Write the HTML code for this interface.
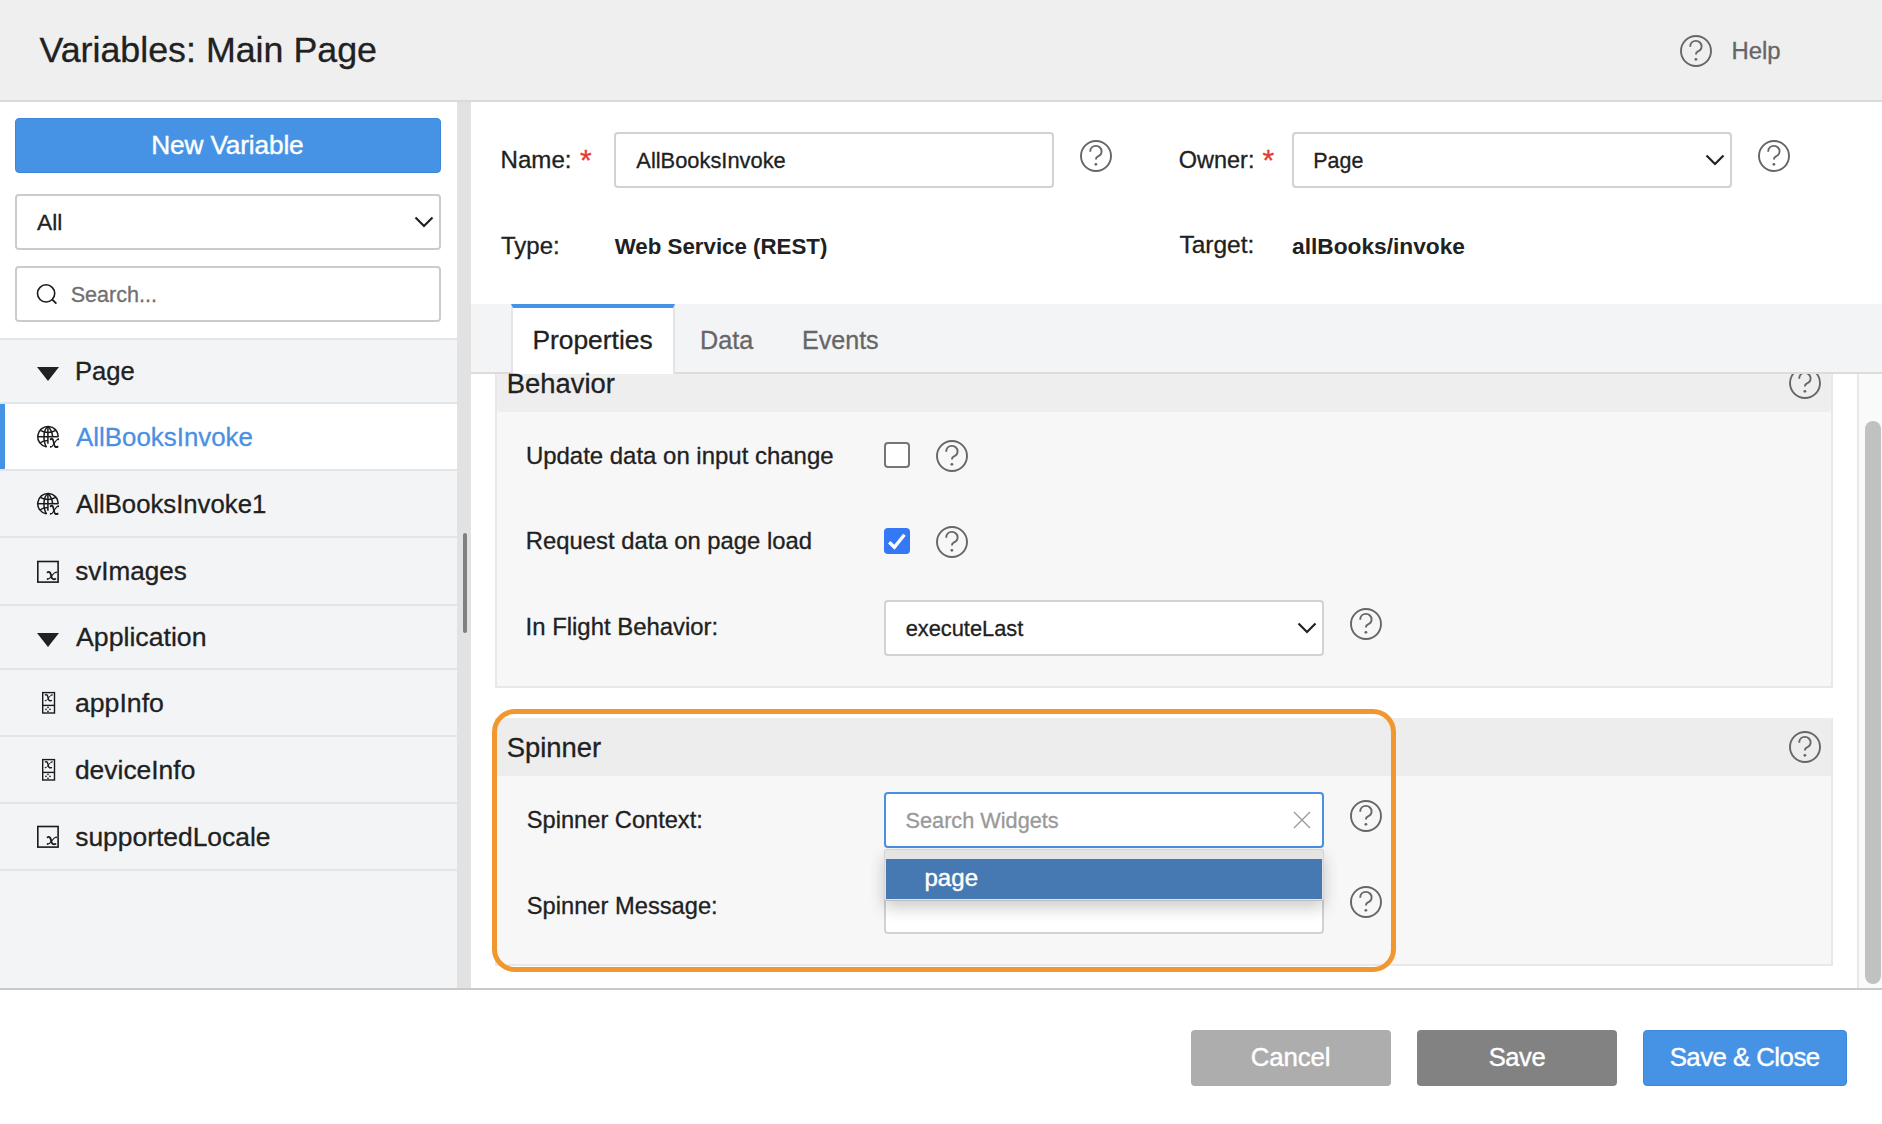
<!DOCTYPE html>
<html><head><meta charset="utf-8"><title>Variables: Main Page</title>
<style>
*{box-sizing:border-box}
html,body{margin:0;padding:0}
body{width:1882px;height:1124px;overflow:hidden;position:relative;background:#fff;font-family:"Liberation Sans",sans-serif;color:#212121}
.b{position:absolute}
.t{position:absolute;white-space:nowrap;line-height:0;font-family:"Liberation Sans",sans-serif;-webkit-text-stroke-width:0.3px}
.hi{position:absolute;overflow:visible}
</style></head><body>
<!-- header -->
<div class="b" style="left:0;top:0;width:1882px;height:100px;background:#efefef"></div>
<div class="b" style="left:0;top:100px;width:1882px;height:2px;background:#dadada"></div>
<svg class="hi" style="left:1679px;top:34px" width="34" height="34" viewBox="0 0 34 34"><circle cx="17" cy="17" r="15" fill="none" stroke="#666" stroke-width="1.9"/><path d="M11.2 12.7 C11.2 9.2 13.7 6.9 16.9 6.9 C20.1 6.9 22.6 9.3 22.6 12.3 C22.6 15.1 20.9 16.6 19 17.3 C17.5 17.9 16.9 18.9 16.9 20.5" fill="none" stroke="#666" stroke-width="1.9"/><circle cx="16.9" cy="25.3" r="1.4" fill="#666"/></svg>

<!-- left panel -->
<div class="b" style="left:0;top:102px;width:457px;height:236px;background:#fff"></div>
<div class="b" style="left:15px;top:118px;width:426px;height:55px;background:#4693e6;border:1px solid #3b87dc;border-radius:4px"></div>
<div class="b" style="left:15px;top:194px;width:426px;height:55.5px;background:#fff;border:2px solid #cbcbcb;border-radius:4px"></div>
<svg class="hi" style="left:414px;top:216px" width="20" height="12" viewBox="0 0 20 12"><path d="M1.5 1.5 L10 10 L18.5 1.5" fill="none" stroke="#212121" stroke-width="2.2"/></svg>
<div class="b" style="left:15px;top:266px;width:426px;height:55.5px;background:#fff;border:2px solid #cbcbcb;border-radius:4px"></div>
<svg class="hi" style="left:35px;top:282px" width="24" height="24" viewBox="0 0 24 24"><circle cx="11.1" cy="11.4" r="8.6" fill="none" stroke="#1a1a1a" stroke-width="1.6"/><path d="M17.3 17.6 L21.4 21.6" stroke="#1a1a1a" stroke-width="1.8"/></svg>
<div class="b" style="left:0;top:338px;width:457px;height:650px;background:#f3f4f6"></div>
<div class="b" style="left:0;top:338px;width:457px;height:2px;background:#e2e4e7"></div>
<div class="b" style="left:0;top:402px;width:457px;height:2px;background:#e1e6ea"></div>
<div class="b" style="left:0;top:404px;width:457px;height:65px;background:#fff"></div>
<div class="b" style="left:0;top:404px;width:5px;height:66px;background:#4693e6"></div>
<div class="b" style="left:0;top:469px;width:457px;height:2px;background:#e1e6ea"></div>
<div class="b" style="left:0;top:536px;width:457px;height:2px;background:#e1e6ea"></div>
<div class="b" style="left:0;top:604px;width:457px;height:2px;background:#e1e6ea"></div>
<div class="b" style="left:0;top:668px;width:457px;height:2px;background:#e1e6ea"></div>
<div class="b" style="left:0;top:735px;width:457px;height:2px;background:#e1e6ea"></div>
<div class="b" style="left:0;top:802px;width:457px;height:2px;background:#e1e6ea"></div>
<div class="b" style="left:0;top:869px;width:457px;height:2px;background:#e1e6ea"></div>
<svg class="hi" style="left:36px;top:366px" width="24" height="16" viewBox="0 0 24 16"><path d="M1 1 H23 L12 15 Z" fill="#212121"/></svg>
<svg class="hi" style="left:36px;top:425px" width="24" height="24" viewBox="0 0 24 24"><g fill="none" stroke="#1a1a1a" stroke-width="1.5"><path d="M22.3 11.7 A10.3 10.3 0 1 0 10.3 21.86"/><path d="M1.7 11.7 H22.3"/><path d="M4.3 5.4 Q12 9.6 19.7 5.4"/><path d="M3.8 18 Q7 15.5 12 15.5"/><path d="M11.9 1.4 V18.8"/><path d="M11.7 1.5 C7.3 5 6.6 16 10.6 22.2"/><path d="M12.1 1.5 C15 4.5 16.3 8 16.6 11.7"/></g><g transform="translate(14.1,13.2) scale(0.88,1.07)"><path d="M0.6 0.9 C1.9 0.2 3.2 0.6 3.8 2.8 L4.6 6 C5.1 8.1 6.5 8.7 8.6 8" fill="none" stroke="#1a1a1a" stroke-width="1.9" stroke-linecap="round"/><path d="M9.6 0.9 C7.6 0.9 6 3 4.4 5.2 C3 7.2 1.9 8.3 0.3 8.1" fill="none" stroke="#1a1a1a" stroke-width="1.2" stroke-linecap="round"/><circle cx="9.3" cy="1" r="0.85" fill="#1a1a1a"/><circle cx="0.6" cy="8" r="0.8" fill="#1a1a1a"/></g></svg>
<svg class="hi" style="left:36px;top:492px" width="24" height="24" viewBox="0 0 24 24"><g fill="none" stroke="#1a1a1a" stroke-width="1.5"><path d="M22.3 11.7 A10.3 10.3 0 1 0 10.3 21.86"/><path d="M1.7 11.7 H22.3"/><path d="M4.3 5.4 Q12 9.6 19.7 5.4"/><path d="M3.8 18 Q7 15.5 12 15.5"/><path d="M11.9 1.4 V18.8"/><path d="M11.7 1.5 C7.3 5 6.6 16 10.6 22.2"/><path d="M12.1 1.5 C15 4.5 16.3 8 16.6 11.7"/></g><g transform="translate(14.1,13.2) scale(0.88,1.07)"><path d="M0.6 0.9 C1.9 0.2 3.2 0.6 3.8 2.8 L4.6 6 C5.1 8.1 6.5 8.7 8.6 8" fill="none" stroke="#1a1a1a" stroke-width="1.9" stroke-linecap="round"/><path d="M9.6 0.9 C7.6 0.9 6 3 4.4 5.2 C3 7.2 1.9 8.3 0.3 8.1" fill="none" stroke="#1a1a1a" stroke-width="1.2" stroke-linecap="round"/><circle cx="9.3" cy="1" r="0.85" fill="#1a1a1a"/><circle cx="0.6" cy="8" r="0.8" fill="#1a1a1a"/></g></svg>
<svg class="hi" style="left:36px;top:560px" width="24" height="24" viewBox="0 0 24 24"><rect x="1.8" y="1.5" width="20.3" height="20.6" fill="none" stroke="#1a1a1a" stroke-width="1.6"/><g transform="translate(11,11.4) scale(0.98,0.95)"><path d="M0.6 0.9 C1.9 0.2 3.2 0.6 3.8 2.8 L4.6 6 C5.1 8.1 6.5 8.7 8.6 8" fill="none" stroke="#1a1a1a" stroke-width="1.9" stroke-linecap="round"/><path d="M9.6 0.9 C7.6 0.9 6 3 4.4 5.2 C3 7.2 1.9 8.3 0.3 8.1" fill="none" stroke="#1a1a1a" stroke-width="1.2" stroke-linecap="round"/><circle cx="9.3" cy="1" r="0.85" fill="#1a1a1a"/><circle cx="0.6" cy="8" r="0.8" fill="#1a1a1a"/></g></svg>
<svg class="hi" style="left:36px;top:632px" width="24" height="16" viewBox="0 0 24 16"><path d="M1 1 H23 L12 15 Z" fill="#212121"/></svg>
<svg class="hi" style="left:41px;top:691px" width="16" height="24" viewBox="0 0 16 24"><rect x="1.7" y="1.6" width="11.8" height="20.4" fill="none" stroke="#1a1a1a" stroke-width="1.4"/><path d="M1.7 14.4 H13.5" stroke="#1a1a1a" stroke-width="1.4"/><g transform="translate(4,3.2) scale(0.74,0.8)"><path d="M0.6 0.9 C1.9 0.2 3.2 0.6 3.8 2.8 L4.6 6 C5.1 8.1 6.5 8.7 8.6 8" fill="none" stroke="#1a1a1a" stroke-width="1.9" stroke-linecap="round"/><path d="M9.6 0.9 C7.6 0.9 6 3 4.4 5.2 C3 7.2 1.9 8.3 0.3 8.1" fill="none" stroke="#1a1a1a" stroke-width="1.2" stroke-linecap="round"/><circle cx="9.3" cy="1" r="0.85" fill="#1a1a1a"/><circle cx="0.6" cy="8" r="0.8" fill="#1a1a1a"/></g><g fill="#1a1a1a"><circle cx="7" cy="16.3" r="0.85"/><circle cx="5" cy="18.3" r="0.85"/><circle cx="9" cy="18.3" r="0.85"/><circle cx="7" cy="20.3" r="0.85"/></g></svg>
<svg class="hi" style="left:41px;top:758px" width="16" height="24" viewBox="0 0 16 24"><rect x="1.7" y="1.6" width="11.8" height="20.4" fill="none" stroke="#1a1a1a" stroke-width="1.4"/><path d="M1.7 14.4 H13.5" stroke="#1a1a1a" stroke-width="1.4"/><g transform="translate(4,3.2) scale(0.74,0.8)"><path d="M0.6 0.9 C1.9 0.2 3.2 0.6 3.8 2.8 L4.6 6 C5.1 8.1 6.5 8.7 8.6 8" fill="none" stroke="#1a1a1a" stroke-width="1.9" stroke-linecap="round"/><path d="M9.6 0.9 C7.6 0.9 6 3 4.4 5.2 C3 7.2 1.9 8.3 0.3 8.1" fill="none" stroke="#1a1a1a" stroke-width="1.2" stroke-linecap="round"/><circle cx="9.3" cy="1" r="0.85" fill="#1a1a1a"/><circle cx="0.6" cy="8" r="0.8" fill="#1a1a1a"/></g><g fill="#1a1a1a"><circle cx="7" cy="16.3" r="0.85"/><circle cx="5" cy="18.3" r="0.85"/><circle cx="9" cy="18.3" r="0.85"/><circle cx="7" cy="20.3" r="0.85"/></g></svg>
<svg class="hi" style="left:36px;top:825px" width="24" height="24" viewBox="0 0 24 24"><rect x="1.8" y="1.5" width="20.3" height="20.6" fill="none" stroke="#1a1a1a" stroke-width="1.6"/><g transform="translate(11,11.4) scale(0.98,0.95)"><path d="M0.6 0.9 C1.9 0.2 3.2 0.6 3.8 2.8 L4.6 6 C5.1 8.1 6.5 8.7 8.6 8" fill="none" stroke="#1a1a1a" stroke-width="1.9" stroke-linecap="round"/><path d="M9.6 0.9 C7.6 0.9 6 3 4.4 5.2 C3 7.2 1.9 8.3 0.3 8.1" fill="none" stroke="#1a1a1a" stroke-width="1.2" stroke-linecap="round"/><circle cx="9.3" cy="1" r="0.85" fill="#1a1a1a"/><circle cx="0.6" cy="8" r="0.8" fill="#1a1a1a"/></g></svg>
<!-- splitter -->
<div class="b" style="left:457px;top:102px;width:14px;height:886px;background:#e2e2e2"></div>
<div class="b" style="left:463px;top:533px;width:4px;height:100px;background:#808080;border-radius:2px"></div>

<!-- right top form -->
<div class="b" style="left:471px;top:102px;width:1411px;height:202px;background:#fff"></div>
<span class="t" style="left:580px;top:145px;font-size:30px;color:#e53935;line-height:1">*</span>
<span class="t" style="left:1262.5px;top:145px;font-size:30px;color:#e53935;line-height:1">*</span>
<div class="b" style="left:614px;top:132px;width:440px;height:55.5px;background:#fff;border:2px solid #d2d2d2;border-radius:4px"></div>
<svg class="hi" style="left:1078.5px;top:139px" width="34" height="34" viewBox="0 0 34 34"><circle cx="17" cy="17" r="15" fill="none" stroke="#666" stroke-width="1.9"/><path d="M11.2 12.7 C11.2 9.2 13.7 6.9 16.9 6.9 C20.1 6.9 22.6 9.3 22.6 12.3 C22.6 15.1 20.9 16.6 19 17.3 C17.5 17.9 16.9 18.9 16.9 20.5" fill="none" stroke="#666" stroke-width="1.9"/><circle cx="16.9" cy="25.3" r="1.4" fill="#666"/></svg>
<div class="b" style="left:1292px;top:132px;width:440px;height:55.5px;background:#fff;border:2px solid #d2d2d2;border-radius:4px"></div>
<svg class="hi" style="left:1705px;top:154px" width="20" height="12" viewBox="0 0 20 12"><path d="M1.5 1.5 L10 10 L18.5 1.5" fill="none" stroke="#212121" stroke-width="2.2"/></svg>
<svg class="hi" style="left:1756.5px;top:139px" width="34" height="34" viewBox="0 0 34 34"><circle cx="17" cy="17" r="15" fill="none" stroke="#666" stroke-width="1.9"/><path d="M11.2 12.7 C11.2 9.2 13.7 6.9 16.9 6.9 C20.1 6.9 22.6 9.3 22.6 12.3 C22.6 15.1 20.9 16.6 19 17.3 C17.5 17.9 16.9 18.9 16.9 20.5" fill="none" stroke="#666" stroke-width="1.9"/><circle cx="16.9" cy="25.3" r="1.4" fill="#666"/></svg>

<!-- tabs -->
<div class="b" style="left:471px;top:304px;width:1411px;height:70px;background:#f3f4f6;border-bottom:2px solid #dcdcdc"></div>
<div class="b" style="left:511px;top:304px;width:164px;height:70px;background:#fff;border-left:2px solid #e4e4e4;border-right:2px solid #e4e4e4;border-top:4px solid #4693e6"></div>

<!-- content -->
<div class="b" style="left:471px;top:374px;width:1386px;height:614px;background:#fff;overflow:hidden">
  <div class="b" style="left:24px;top:-40px;width:1338px;height:354px;background:#f7f7f7;border:2px solid #e8e8e8;border-top:0"></div>
  <div class="b" style="left:26px;top:-40px;width:1334px;height:77.6px;background:#eeeeee;border-radius:0 0 4px 4px"></div>
  <div class="b" style="left:24px;top:344px;width:1338px;height:248px;background:#f7f7f7;border:2px solid #e8e8e8;border-top:0"></div>
  <div class="b" style="left:26px;top:344px;width:1334px;height:58px;background:#ededed;border-radius:4px 4px 0 0"></div>
  <div class="b" style="left:0;top:0;width:0;height:0"><svg class="hi" style="left:1317px;top:-8px" width="34" height="34" viewBox="0 0 34 34"><circle cx="17" cy="17" r="15" fill="none" stroke="#666" stroke-width="1.9"/><path d="M11.2 12.7 C11.2 9.2 13.7 6.9 16.9 6.9 C20.1 6.9 22.6 9.3 22.6 12.3 C22.6 15.1 20.9 16.6 19 17.3 C17.5 17.9 16.9 18.9 16.9 20.5" fill="none" stroke="#666" stroke-width="1.9"/><circle cx="16.9" cy="25.3" r="1.4" fill="#666"/></svg></div>
</div>
<div class="b" style="left:471px;top:374px;width:1386px;height:0;border-top:0"></div>
<!-- checkboxes -->
<div class="b" style="left:884px;top:442px;width:26px;height:26px;background:#fff;border:2px solid #767676;border-radius:4px"></div>
<svg class="hi" style="left:935px;top:439px" width="34" height="34" viewBox="0 0 34 34"><circle cx="17" cy="17" r="15" fill="none" stroke="#666" stroke-width="1.9"/><path d="M11.2 12.7 C11.2 9.2 13.7 6.9 16.9 6.9 C20.1 6.9 22.6 9.3 22.6 12.3 C22.6 15.1 20.9 16.6 19 17.3 C17.5 17.9 16.9 18.9 16.9 20.5" fill="none" stroke="#666" stroke-width="1.9"/><circle cx="16.9" cy="25.3" r="1.4" fill="#666"/></svg>
<div class="b" style="left:884px;top:528px;width:26px;height:26px;background:#3478f6;border-radius:4px"></div>
<svg class="hi" style="left:884px;top:528px" width="26" height="26" viewBox="0 0 26 26"><path d="M5.2 14.2 L10.4 19.2 L20.4 6.8" fill="none" stroke="#fff" stroke-width="3.4"/></svg>
<svg class="hi" style="left:935px;top:525px" width="34" height="34" viewBox="0 0 34 34"><circle cx="17" cy="17" r="15" fill="none" stroke="#666" stroke-width="1.9"/><path d="M11.2 12.7 C11.2 9.2 13.7 6.9 16.9 6.9 C20.1 6.9 22.6 9.3 22.6 12.3 C22.6 15.1 20.9 16.6 19 17.3 C17.5 17.9 16.9 18.9 16.9 20.5" fill="none" stroke="#666" stroke-width="1.9"/><circle cx="16.9" cy="25.3" r="1.4" fill="#666"/></svg>
<div class="b" style="left:884px;top:600px;width:440px;height:56px;background:#fff;border:2px solid #d2d2d2;border-radius:4px"></div>
<svg class="hi" style="left:1297px;top:622px" width="20" height="12" viewBox="0 0 20 12"><path d="M1.5 1.5 L10 10 L18.5 1.5" fill="none" stroke="#212121" stroke-width="2.2"/></svg>
<svg class="hi" style="left:1348.5px;top:607px" width="34" height="34" viewBox="0 0 34 34"><circle cx="17" cy="17" r="15" fill="none" stroke="#666" stroke-width="1.9"/><path d="M11.2 12.7 C11.2 9.2 13.7 6.9 16.9 6.9 C20.1 6.9 22.6 9.3 22.6 12.3 C22.6 15.1 20.9 16.6 19 17.3 C17.5 17.9 16.9 18.9 16.9 20.5" fill="none" stroke="#666" stroke-width="1.9"/><circle cx="16.9" cy="25.3" r="1.4" fill="#666"/></svg>
<svg class="hi" style="left:1788px;top:730px" width="34" height="34" viewBox="0 0 34 34"><circle cx="17" cy="17" r="15" fill="none" stroke="#666" stroke-width="1.9"/><path d="M11.2 12.7 C11.2 9.2 13.7 6.9 16.9 6.9 C20.1 6.9 22.6 9.3 22.6 12.3 C22.6 15.1 20.9 16.6 19 17.3 C17.5 17.9 16.9 18.9 16.9 20.5" fill="none" stroke="#666" stroke-width="1.9"/><circle cx="16.9" cy="25.3" r="1.4" fill="#666"/></svg>
<!-- spinner inputs -->
<div class="b" style="left:884px;top:877px;width:440px;height:57px;background:#fff;border:2px solid #d2d2d2;border-radius:4px"></div>
<svg class="hi" style="left:1348.5px;top:885px" width="34" height="34" viewBox="0 0 34 34"><circle cx="17" cy="17" r="15" fill="none" stroke="#666" stroke-width="1.9"/><path d="M11.2 12.7 C11.2 9.2 13.7 6.9 16.9 6.9 C20.1 6.9 22.6 9.3 22.6 12.3 C22.6 15.1 20.9 16.6 19 17.3 C17.5 17.9 16.9 18.9 16.9 20.5" fill="none" stroke="#666" stroke-width="1.9"/><circle cx="16.9" cy="25.3" r="1.4" fill="#666"/></svg>
<div class="b" style="left:884px;top:792px;width:440px;height:56px;background:#fff;border:2px solid #4a90e2;border-radius:4px"></div>
<svg class="hi" style="left:1292px;top:810px" width="20" height="20" viewBox="0 0 20 20"><path d="M2 2 L18 18 M18 2 L2 18" stroke="#9a9a9a" stroke-width="1.25"/></svg>
<svg class="hi" style="left:1348.5px;top:799px" width="34" height="34" viewBox="0 0 34 34"><circle cx="17" cy="17" r="15" fill="none" stroke="#666" stroke-width="1.9"/><path d="M11.2 12.7 C11.2 9.2 13.7 6.9 16.9 6.9 C20.1 6.9 22.6 9.3 22.6 12.3 C22.6 15.1 20.9 16.6 19 17.3 C17.5 17.9 16.9 18.9 16.9 20.5" fill="none" stroke="#666" stroke-width="1.9"/><circle cx="16.9" cy="25.3" r="1.4" fill="#666"/></svg>
<div class="b" style="left:884px;top:849px;width:440px;height:51.5px;background:#e4e4e4;border:1px solid #d4d4d4;border-bottom:1.5px solid #bdbdbd;border-radius:3px;box-shadow:0 7px 16px rgba(0,0,0,0.2)"></div>
<div class="b" style="left:886px;top:859px;width:436px;height:40px;background:#4679b2"></div>
<!-- orange highlight -->
<div class="b" style="left:492px;top:709px;width:904px;height:263px;border:5.5px solid #f0982f;border-radius:23px"></div>

<!-- scrollbar -->
<div class="b" style="left:1857px;top:374px;width:25px;height:614px;background:#fafafa;border-left:2px solid #e8e8e8"></div>
<div class="b" style="left:1865px;top:421px;width:16px;height:563px;background:#c1c1c1;border-radius:8px"></div>

<!-- footer -->
<div class="b" style="left:0;top:988px;width:1882px;height:2px;background:#c9c9c9"></div>
<div class="b" style="left:1191px;top:1030px;width:200px;height:56px;background:#adadad;border-radius:4px"></div>
<div class="b" style="left:1417px;top:1030px;width:200px;height:56px;background:#828282;border-radius:4px"></div>
<div class="b" style="left:1643px;top:1030px;width:204px;height:56px;background:#4693e6;border-radius:4px;border:1px solid #3b87dc"></div>

<span id="t1" class="t" style="left:39.42px;top:50.00px;font-size:35.8px;color:#212121;">Variables: Main Page</span>
<span id="t2" class="t" style="left:1731.39px;top:51.20px;font-size:23.92px;color:#666666;">Help</span>
<span id="t3" class="t" style="left:151.30px;top:145.00px;font-size:26.26px;color:#ffffff;-webkit-text-stroke-width:0.4px;letter-spacing:-0.164px;">New Variable</span>
<span id="t4" class="t" style="left:37.00px;top:221.80px;font-size:22.83px;color:#212121;">All</span>
<span id="t5" class="t" style="left:70.63px;top:295.30px;font-size:21.58px;color:#707070;">Search...</span>
<span id="t6" class="t" style="left:74.95px;top:371.20px;font-size:25.6px;color:#212121;">Page</span>
<span id="t7" class="t" style="left:76.10px;top:436.90px;font-size:25.86px;color:#4a90e2;">AllBooksInvoke</span>
<span id="t8" class="t" style="left:76.10px;top:503.80px;font-size:25.72px;color:#212121;">AllBooksInvoke1</span>
<span id="t9" class="t" style="left:75.22px;top:571.30px;font-size:26.08px;color:#212121;">svImages</span>
<span id="t10" class="t" style="left:76.00px;top:637.30px;font-size:26.69px;color:#212121;">Application</span>
<span id="t11" class="t" style="left:74.93px;top:702.80px;font-size:26.7px;color:#212121;">appInfo</span>
<span id="t12" class="t" style="left:74.94px;top:769.80px;font-size:26.41px;color:#212121;">deviceInfo</span>
<span id="t13" class="t" style="left:75.21px;top:836.80px;font-size:26.42px;color:#212121;">supportedLocale</span>
<span id="t14" class="t" style="left:500.57px;top:159.50px;font-size:24.1px;color:#212121;">Name:</span>
<span id="t16" class="t" style="left:636.30px;top:161.40px;font-size:21.86px;color:#212121;">AllBooksInvoke</span>
<span id="t17" class="t" style="left:1178.84px;top:159.90px;font-size:23.46px;color:#212121;">Owner:</span>
<span id="t18" class="t" style="left:1313.28px;top:160.90px;font-size:21.45px;color:#212121;">Page</span>
<span id="t19" class="t" style="left:501.02px;top:245.50px;font-size:23.98px;color:#212121;">Type:</span>
<span id="t20" class="t" style="left:614.70px;top:246.50px;font-size:22.31px;color:#212121;font-weight:bold;-webkit-text-stroke-width:0;">Web Service (REST)</span>
<span id="t21" class="t" style="left:1179.41px;top:245.00px;font-size:24.5px;color:#212121;">Target:</span>
<span id="t22" class="t" style="left:1292.02px;top:245.50px;font-size:22.73px;color:#212121;font-weight:bold;-webkit-text-stroke-width:0;">allBooks/invoke</span>
<span id="t23" class="t" style="left:532.39px;top:340.00px;font-size:26.4px;color:#212121;">Properties</span>
<span id="t24" class="t" style="left:699.98px;top:339.80px;font-size:25.2px;color:#666666;">Data</span>
<span id="t25" class="t" style="left:801.89px;top:339.80px;font-size:25.13px;color:#666666;">Events</span>
<span id="t26" class="t" style="left:506.71px;top:384.40px;font-size:27.42px;color:#212121;">Behavior</span>
<span id="t27" class="t" style="left:525.90px;top:455.80px;font-size:23.96px;color:#212121;">Update data on input change</span>
<span id="t28" class="t" style="left:525.79px;top:540.90px;font-size:23.83px;color:#212121;">Request data on page load</span>
<span id="t29" class="t" style="left:525.55px;top:627.00px;font-size:23.91px;color:#212121;">In Flight Behavior:</span>
<span id="t30" class="t" style="left:905.63px;top:629.40px;font-size:21.84px;color:#212121;">executeLast</span>
<span id="t31" class="t" style="left:506.67px;top:748.30px;font-size:27.43px;color:#212121;">Spinner</span>
<span id="t32" class="t" style="left:526.84px;top:820.00px;font-size:23.63px;color:#212121;">Spinner Context:</span>
<span id="t33" class="t" style="left:526.83px;top:905.60px;font-size:23.68px;color:#212121;">Spinner Message:</span>
<span id="t34" class="t" style="left:905.52px;top:821.40px;font-size:21.71px;color:#999999;">Search Widgets</span>
<span id="t35" class="t" style="left:924.44px;top:878.00px;font-size:24px;color:#ffffff;-webkit-text-stroke-width:0.45px;letter-spacing:0.067px;">page</span>
<span id="t36" class="t" style="left:1250.71px;top:1056.90px;font-size:25.84px;color:#ffffff;-webkit-text-stroke-width:0.4px;letter-spacing:-0.120px;">Cancel</span>
<span id="t37" class="t" style="left:1488.65px;top:1056.90px;font-size:25.56px;color:#ffffff;-webkit-text-stroke-width:0.4px;letter-spacing:-0.400px;">Save</span>
<span id="t38" class="t" style="left:1669.64px;top:1056.90px;font-size:25.84px;color:#ffffff;-webkit-text-stroke-width:0.4px;letter-spacing:-0.545px;">Save &amp; Close</span>
</body></html>
